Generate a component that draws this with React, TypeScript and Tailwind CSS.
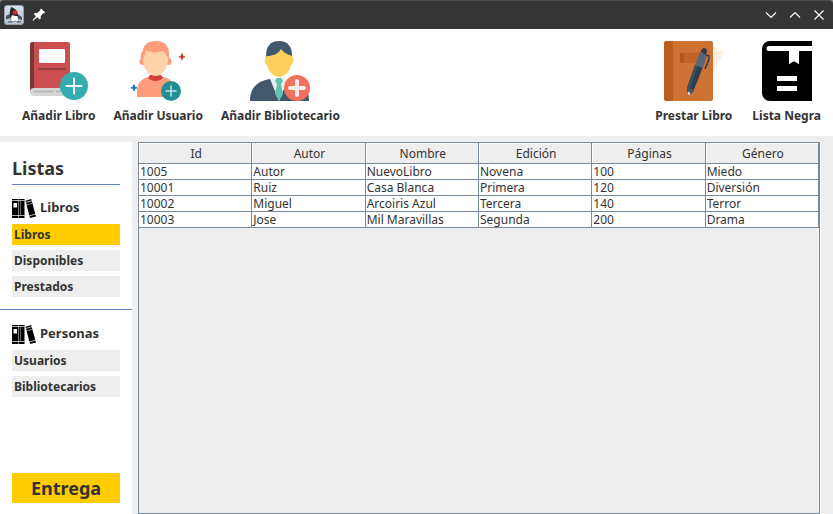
import type { ReactNode } from "react";

const columns = ["Id", "Autor", "Nombre", "Edición", "Páginas", "Género"];
const rows = [
  ["1005", "Autor", "NuevoLibro", "Novena", "100", "Miedo"],
  ["10001", "Ruiz", "Casa Blanca", "Primera", "120", "Diversión"],
  ["10002", "Miguel", "Arcoiris Azul", "Tercera", "140", "Terror"],
  ["10003", "Jose", "Mil Maravillas", "Segunda", "200", "Drama"],
];

function DukeIcon() {
  return (
    <svg width="20" height="20" viewBox="0 0 20 20" aria-hidden="true">
      <defs>
        <linearGradient id="duke" x1="0" y1="0" x2="0" y2="1">
          <stop offset="0" stopColor="#d9e1e9" />
          <stop offset="1" stopColor="#b4c2d2" />
        </linearGradient>
      </defs>
      <rect x="0.5" y="0.5" width="19" height="19" rx="2.5" fill="url(#duke)" stroke="#93a0ae" />
      <path d="M2 11l4-2 2 3-4 2H2zM13 9l5 3v3l-3-1-2-3z" fill="#4a535b" />
      <path d="M9 8l4 1c1 3 2 6 1 8l-3-1-4 1c-1-3 0-6 2-9z" fill="#fff" stroke="#444" strokeWidth="0.600" />
      <path d="M7 2c4 1 7 4 7 9l-3 0-3-1-2 3c-1-4 0-8 1-11z" fill="#26282b" />
      <circle cx="11" cy="7.500" r="2.300" fill="#e0242e" />
      <path d="M4 17h4M13 17h4" stroke="#4a535b" strokeWidth="1.200" />
    </svg>
  );
}

function PinIcon() {
  return (
    <svg width="14" height="14" viewBox="0 0 14 14" aria-hidden="true">
      <path d="M9 .5L13.200 4.500l-.9.800-1-.1-2.600 2.900.1 2.400-1.100 1L5.200 9.300 1.200 12.800l-.7-.6L4 8.200 1.800 6l1-1.100 2.400.1L8.300 2.400l-.1-1z" fill="#fff" />
    </svg>
  );
}

function AddBookIcon() {
  return (
    <svg width="60" height="60" viewBox="0 0 60 60" aria-hidden="true">
      <path d="M4 1h35a2 2 0 0 1 2 2v46H1V4a3 3 0 0 1 3-3z" fill="#cb4f51" />
      <path d="M4 1h1v46l-4 3V4a3 3 0 0 1 3-3z" fill="#7d3538" />
      <path d="M5 47h36v8H5a4 4 0 0 1 0-8z" fill="#d5d5d5" />
      <path d="M5 50.500h20M27 50.500h7" stroke="#b4b4b4" strokeWidth="1.300" />
      <rect x="10" y="8" width="26" height="14" rx="1" fill="#fff" />
      <path d="M10 28h26" stroke="#963d40" strokeWidth="2" strokeLinecap="round" />
      <circle cx="45" cy="45" r="14" fill="#33adb0" />
      <path d="M45 37.500v15M37.500 45h15" stroke="#fff" strokeWidth="2" strokeLinecap="round" />
    </svg>
  );
}

function AddUserIcon() {
  return (
    <svg width="60" height="60" viewBox="0 0 60 60" aria-hidden="true">
      <path d="M9 56 L9 50 C9 42 14 37 21 36 L35 36 C42 37 47 42 47 50 L47 56 Z" fill="#ff9c7b" />
      <path d="M22 34 L33 34 L35 37 C31 41 24 41 20 37 Z" fill="#d43f33" />
      <circle cx="15" cy="20.500" r="3.500" fill="#ff9c7b" />
      <circle cx="40" cy="20.500" r="3.500" fill="#ff9c7b" />
      <path d="M13 20 C13 16 12 12 15 10 C15 4 20 0 28 0 C37 0 41 5 41 12 L41 21 L14 21 Z" fill="#ff9c7b" />
      <path d="M15 20 C16 15 17 13 18 9 C23 12 29 12 34 10 C37 11 39 14 40 18 C40 27 34 35 28 35 C21 35 15 28 15 20 Z" fill="#ffd3a8" />
      <circle cx="43" cy="50" r="10" fill="#228f94" />
      <path d="M43 45v10M38 50h10" stroke="#bfe5e6" strokeWidth="1.500" strokeLinecap="round" />
      <path d="M54 13.500v4.500M52 15.700h4" stroke="#d43f33" strokeWidth="2" strokeLinecap="round" />
      <path d="M6 44.500v4.500M4 46.700h4" stroke="#1476c6" strokeWidth="2" strokeLinecap="round" />
    </svg>
  );
}

function AddLibrarianIcon() {
  return (
    <svg width="60" height="60" viewBox="0 0 60 60" aria-hidden="true">
      <path d="M0 60c0-13 7-20 20-22h19c13 2 20 9 20 22z" fill="#42596d" />
      <path d="M20 38l9 22 9-22-9-2z" fill="#eceff1" />
      <path d="M27 37h4l2 3-2 3 2 10-4 7-4-7 2-10-2-3z" fill="#60c3ad" />
      <path d="M16 15C16 6 20 0 29 0s13 6 13 15l-1 5H17z" fill="#42596d" />
      <path d="M17 15c6 0 11-2 14-7 3 4 6 5 11 7 2 2 2 8-1 9-1 7-7 12-12 12s-11-5-12-12c-3-1-3-7 0-9z" fill="#ffd05b" />
      <circle cx="47" cy="47" r="13" fill="#f2705c" />
      <path d="M47 40v14M40 47h14" stroke="#f6f0f0" strokeWidth="4" strokeLinecap="round" />
    </svg>
  );
}

function LendBookIcon() {
  return (
    <svg width="60" height="60" viewBox="0 0 60 60" aria-hidden="true">
      <path d="M49 5l11 6-10 20h-1z" fill="#fff1e2" />
      <rect x="0" y="0" width="49" height="60" rx="2" fill="#cf7133" />
      <path d="M3 0h6v60H3a3 3 0 0 1-3-3V3a3 3 0 0 1 3-3z" fill="#bc5e22" />
      <rect x="16" y="12" width="22" height="10" rx="1" fill="#c0632a" />
      <path d="M16 12h4v10h-4z" fill="#b4561d" />
      <path d="M31 24 L39 26 L29 51 L25 54 L23 47 Z" fill="#2c3d4b" />
      <path d="M31 24 L34 25 L25 50 L23 47 Z" fill="#3d5060" />
      <path d="M23 46 L29 49 L28 52 L25 53 L23 51 Z" fill="#445563" />
      <path d="M24 51 L26 52 L25 54 Z" fill="#fff" stroke="#fff" strokeWidth="0.500" />
      <path d="M36 11 L43 14 L39 27 L31 24 Z" fill="#596775" />
      <path d="M37 11 C37 6 43 6 43 10 L42 14 Z" fill="#2c3d4b" />
      <path d="M42 14 L45 15 L45 18 L41 28" fill="none" stroke="#2c3d4b" strokeWidth="1.500" strokeLinejoin="round" />
    </svg>
  );
}

function BlackListIcon() {
  return (
    <svg width="50" height="60" viewBox="0 0 50 60" aria-hidden="true">
      <path d="M8 0h42v5H7a2.500 2.500 0 0 0 0 5h20v13l5-3 5 3V10h13v50H8a8 8 0 0 1-8-8V8a8 8 0 0 1 8-8z" fill="#000" />
      <path d="M27 10h10v13l-5-3-5 3z" fill="#fff" />
      <path d="M15 37.500h20M15 47.500h20" stroke="#fff" strokeWidth="5" />
    </svg>
  );
}

function BooksIcon() {
  return (
    <svg width="24" height="19" viewBox="0 0 24 19" aria-hidden="true">
      <path d="M0 0h6.500v19H0zM7 0h5.500v19H7z" />
      <path d="M13.500 1.800L19.200 0 24 17.500 18 19z" />
      <path d="M0 1.500h12.500M0 16.500h12.500M13.500 3.500L20 1.800M17 17L24 15" stroke="#fff" strokeWidth="0.700" />
      <path d="M1.500 4h3.500v4.500H1.500z" fill="#fff" />
      <path d="M8.500 2v14" stroke="#fff" strokeWidth="0.400" />
      <path d="M14 6l6.500-1.700" stroke="#fff" strokeWidth="0.500" />
    </svg>
  );
}

function ToolButton({ icon, label }: { icon: ReactNode; label: string }) {
  return (
    <button type="button" className="flex flex-col items-center gap-[7px] whitespace-nowrap text-xs leading-4 font-bold">
      {icon}
      {label}
    </button>
  );
}

function NavGroup({ title, items, active }: { title: string; items: string[]; active?: string }) {
  return (
    <section className="px-3">
      <h2 className="flex h-5 items-center gap-1 text-[13px] font-bold">
        <BooksIcon />
        {title}
      </h2>
      <ul className="mt-1.5 flex flex-col gap-[5px]">
        {items.map((item) => (
          <li key={item}>
            <button
              type="button"
              className={`block h-[21px] w-full px-0.5 text-left text-xs font-bold ${item === active ? "bg-[#ffcc00]" : "bg-[#eeeeee]"}`}
            >
              {item}
            </button>
          </li>
        ))}
      </ul>
    </section>
  );
}

function WindowButton({ label, path }: { label: string; path: string }) {
  return (
    <button type="button" aria-label={label}>
      <svg width="12" height="12" viewBox="0 0 12 12" fill="none" stroke="#fcfcfc" strokeWidth="1.200">
        <path d={path} />
      </svg>
    </button>
  );
}

export default function App() {
  return (
    <div className="flex h-screen flex-col bg-[#eeeeee] font-['Noto_Sans',sans-serif] text-[#333333]">
      <div className="bg-[#8a8a8a]">
        <header className="flex h-[29px] items-center justify-between rounded-t border-t border-[#4a4a4a] bg-[#353535] pr-2 pl-1">
          <div className="flex items-center gap-2">
            <DukeIcon />
            <button type="button" aria-label="Fijar ventana">
              <PinIcon />
            </button>
          </div>
          <div className="flex items-center gap-3">
            <WindowButton label="Minimizar" path="M1 3.500l5 5 5-5" />
            <WindowButton label="Maximizar" path="M1 8.500l5-5 5 5" />
            <WindowButton label="Cerrar" path="M1.500 1.500l9 9M10.500 1.500l-9 9" />
          </div>
        </header>
      </div>

      <nav className="flex justify-between bg-white pt-3 pr-3 pb-3 pl-[22px]">
        <div className="flex gap-[18px]">
          <ToolButton icon={<AddBookIcon />} label="Añadir Libro" />
          <ToolButton icon={<AddUserIcon />} label="Añadir Usuario" />
          <ToolButton icon={<AddLibrarianIcon />} label="Añadir Bibliotecario" />
        </div>
        <div className="flex gap-5">
          <ToolButton icon={<LendBookIcon />} label="Prestar Libro" />
          <ToolButton icon={<BlackListIcon />} label="Lista Negra" />
        </div>
      </nav>

      <div className="flex min-h-0 flex-1 gap-1.5 pt-1.5">
        <aside className="flex w-[132px] shrink-0 flex-col bg-white pt-3">
          <h1 className="mx-3 mb-[13px] h-[31px] border-b border-[#6382bf] text-lg leading-7 font-bold">Listas</h1>
          <NavGroup title="Libros" items={["Libros", "Disponibles", "Prestados"]} active="Libros" />
          <hr className="mt-3 mb-3.5 border-[#6382bf]" />
          <NavGroup title="Personas" items={["Usuarios", "Bibliotecarios"]} />
          <button type="button" className="mx-3 mt-auto mb-[11px] h-[30px] bg-[#ffcc00] text-lg leading-7 font-bold">
            Entrega
          </button>
        </aside>

        <main className="mr-3 min-w-0 flex-1 border-r border-white">
          <div className="h-full border border-[#7a8a99]">
            <table className="w-full table-fixed border-separate border-spacing-0 text-xs leading-[15px]">
              <thead>
                <tr>
                  {columns.map((name) => (
                    <th
                      key={name}
                      scope="col"
                      className="h-[21px] border-r border-b border-[#7a8a99] p-0 pl-0.5 font-normal shadow-[inset_1px_1px_0_#ffffff]"
                    >
                      {name}
                    </th>
                  ))}
                </tr>
              </thead>
              <tbody>
                {rows.map((row) => (
                  <tr key={row[0]}>
                    {row.map((cell, i) => (
                      <td key={i} className="h-4 border-r border-b border-[#7a8a99] bg-white p-0 pl-px whitespace-nowrap">
                        {cell}
                      </td>
                    ))}
                  </tr>
                ))}
              </tbody>
            </table>
          </div>
        </main>
      </div>
    </div>
  );
}
